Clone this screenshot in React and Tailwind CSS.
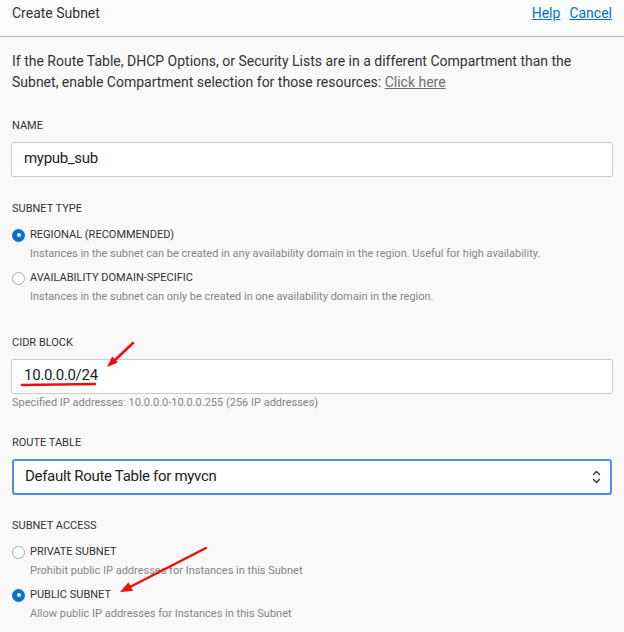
import React from 'react';

const font = { fontFamily: 'Roboto, "Liberation Sans", sans-serif' };

function Radio({ checked }) {
  if (checked) {
    return (
      <span className="w-[13px] h-[13px] rounded-full bg-[#0572ce] flex items-center justify-center shrink-0">
        <span className="w-[4px] h-[4px] rounded-full bg-white" />
      </span>
    );
  }
  return <span className="w-[13px] h-[13px] rounded-full border border-[#a9a9a9] bg-white shrink-0" />;
}

function RadioOption({ checked, label, desc, className = '' }) {
  return (
    <div className={className}>
      <div className="flex items-center h-4 gap-[5px]">
        <Radio checked={checked} />
        <span className="text-[11px] leading-4 text-[#333]">{label}</span>
      </div>
      <div className="mt-[3px] pl-[18px] text-[11px] leading-4 text-[#858585]">{desc}</div>
    </div>
  );
}

function Label({ children, className = '' }) {
  return <div className={`text-[11px] leading-4 text-[#333] uppercase ${className}`}>{children}</div>;
}

export default function App() {
  return (
    <div className="relative w-[624px] h-[632px] overflow-hidden bg-[#f9f9f9]" style={font}>
      {/* Header */}
      <div className="h-[37px] flex items-start justify-between px-3 pt-[3px] border-b border-[#b5bcc6] bg-[#fbfbfb]">
        <span className="text-[14px] leading-5 text-[#333]">Create Subnet</span>
        <div className="flex gap-[9px] text-[14px] leading-5 text-[#0572ce]">
          <a className="underline">Help</a>
          <a className="underline">Cancel</a>
        </div>
      </div>

      <div className="px-3">
        <p className="pt-[14px] text-[14px] leading-[21px] text-[#333]">
          If the Route Table, DHCP Options, or Security Lists are in a different Compartment than the
          Subnet, enable Compartment selection for those resources: <a className="underline text-[#6f6f6f]">Click here</a>
        </p>

        <Label className="mt-[25px]">Name</Label>
        <div className="mt-[8px] -mx-px h-[35px] border border-[#c4cbd3] rounded-[3px] bg-white flex items-center px-3 pb-[2px] text-[15px] tracking-[-0.3px] text-[#222]">
          mypub_sub
        </div>

        <Label className="mt-[24px]">Subnet Type</Label>
        <RadioOption
          className="mt-[10px]"
          checked
          label="REGIONAL (RECOMMENDED)"
          desc="Instances in the subnet can be created in any availability domain in the region. Useful for high availability."
        />
        <RadioOption
          className="mt-[8px]"
          label="AVAILABILITY DOMAIN-SPECIFIC"
          desc="Instances in the subnet can only be created in one availability domain in the region."
        />

        <Label className="mt-[30px]">CIDR Block</Label>
        <div className="mt-[8px] -mx-px h-[35px] border border-[#c4cbd3] rounded-[3px] bg-white flex items-center px-3 pb-[2px] text-[15px] tracking-[-0.3px] text-[#222]">
          10.0.0.0/24
        </div>
        <div className="mt-px text-[11px] leading-4 text-[#858585]">
          Specified IP addresses: 10.0.0.0-10.0.0.255 (256 IP addresses)
        </div>

        <Label className="mt-[24px]">Route Table</Label>
        <div className="mt-[8px] h-[36px] border-2 border-[#4a90e2] rounded-[3px] bg-white flex items-center justify-between pl-[11px] pr-[9px] pb-px text-[15px] tracking-[-0.3px] text-[#222]">
          <span>Default Route Table for myvcn</span>
          <svg width="9" height="14" viewBox="0 0 9 14" fill="none" stroke="#333" strokeWidth="1.4" strokeLinecap="round" strokeLinejoin="round">
            <path d="M1.5 4.5 L4.5 1.5 L7.5 4.5" />
            <path d="M1.5 9.5 L4.5 12.5 L7.5 9.5" />
          </svg>
        </div>

        <Label className="mt-[23px]">Subnet Access</Label>
        <RadioOption
          className="mt-[10px]"
          label="PRIVATE SUBNET"
          desc="Prohibit public IP addresses for Instances in this Subnet"
        />
        <RadioOption
          className="mt-[8px]"
          checked
          label="PUBLIC SUBNET"
          desc="Allow public IP addresses for Instances in this Subnet"
        />
      </div>

      {/* Red annotations */}
      <svg className="absolute inset-0 pointer-events-none" width="624" height="632">
        <line x1="133" y1="343" x2="113" y2="362" stroke="#f20d0d" strokeWidth="2.5" strokeLinecap="round" />
        <polygon points="107,367 112.2,356.4 118,362.6" fill="#f20d0d" />
        <line x1="22" y1="385" x2="95" y2="384" stroke="#f20d0d" strokeWidth="2.5" strokeLinecap="round" />
        <line x1="206" y1="548" x2="128" y2="588" stroke="#f20d0d" strokeWidth="2.5" strokeLinecap="round" />
        <polygon points="120,592 128.5,582.2 133,591" fill="#f20d0d" />
      </svg>
    </div>
  );
}
